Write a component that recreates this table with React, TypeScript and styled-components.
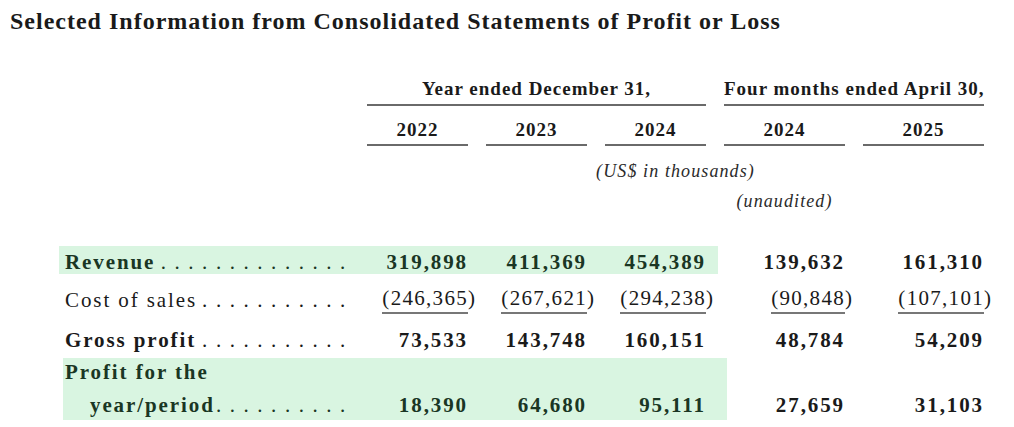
import React from "react";
import styled, { createGlobalStyle } from "styled-components";

const GlobalStyle = createGlobalStyle`
  html, body { margin: 0; padding: 0; background: #ffffff; }
  body { font-family: "Liberation Serif", "Times New Roman", serif; color: #1a1a1a; }
`;

const INK = "#1a1a1a";
const GREEN_INK = "#1a3624";

const Page = styled.div`
  position: relative;
  width: 1014px;
  height: 427px;
  overflow: hidden;
  background: #ffffff;
`;

const Highlight = styled.div`
  position: absolute;
  z-index: 0;
  background: #d9f5e1;
`;

const Content = styled.div`
  position: relative;
  z-index: 1;
`;

const Title = styled.h1`
  margin: 0;
  padding: 8px 0 0 10px;
  height: 26px;
  font-size: 24px;
  line-height: 26px;
  font-weight: bold;
  letter-spacing: 1px;
  color: ${INK};
  white-space: nowrap;
`;

const Row = styled.div<{ $mt: number }>`
  display: grid;
  grid-template-columns: 284px repeat(3, 101px) repeat(2, 121px);
  column-gap: 18px;
  margin: ${(p) => p.$mt}px 0 0 65px;
  align-items: end;
`;

const GroupHead = styled.div<{ $from: number; $to: number }>`
  grid-column: ${(p) => p.$from} / ${(p) => p.$to};
  text-align: center;
  font-size: 19px;
  line-height: 24px;
  font-weight: bold;
  letter-spacing: 1px;
  padding-bottom: 3px;
  border-bottom: 2px solid #6a6a6a;
  white-space: nowrap;
`;

const YearHead = styled.div<{ $col: number }>`
  grid-column: ${(p) => p.$col};
  text-align: center;
  font-size: 19px;
  line-height: 24px;
  font-weight: bold;
  letter-spacing: 1px;
  padding-bottom: 2px;
  border-bottom: 2px solid #6a6a6a;
`;

const Note = styled.div<{ $from: number; $to: number }>`
  grid-column: ${(p) => p.$from} / ${(p) => p.$to};
  text-align: center;
  font-size: 18px;
  line-height: 24px;
  font-style: italic;
  letter-spacing: 1.1px;
  white-space: nowrap;
  color: #2a2a2a;
`;

const LabelCell = styled.div<{ $bold?: boolean; $hl?: boolean; $lh: number }>`
  grid-column: 1;
  font-size: 21px;
  line-height: ${(p) => p.$lh}px;
  font-weight: ${(p) => (p.$bold ? "bold" : "normal")};
  letter-spacing: 1.9px;
  color: ${(p) => (p.$hl ? GREEN_INK : INK)};
`;

const LabelLine = styled.div<{ $indent?: number }>`
  display: flex;
  align-items: baseline;
  justify-content: space-between;
  padding-left: ${(p) => p.$indent ?? 0}px;
`;

const LabelText = styled.span`
  white-space: nowrap;
`;

const Leader = styled.span`
  white-space: pre;
  font-weight: normal;
  letter-spacing: 1.65px;
  padding-right: 2px;
`;

const NumCell = styled.div<{ $bold?: boolean; $hl?: boolean; $lh: number }>`
  text-align: right;
  font-size: 21px;
  line-height: ${(p) => p.$lh}px;
  font-weight: ${(p) => (p.$bold ? "bold" : "normal")};
  letter-spacing: ${(p) => (p.$bold ? 1.9 : 1.3)}px;
  color: ${(p) => (p.$hl ? GREEN_INK : INK)};
  white-space: nowrap;
`;

const Figure = styled.span<{ $rule?: boolean }>`
  display: inline-block;
  border-bottom: ${(p) => (p.$rule ? "2px solid #777" : "0")};
  line-height: inherit;
`;

const Close = styled.span`
  display: inline-block;
  width: 0;
  overflow: visible;
`;

type Line = {
  label: string[];
  dots: number;
  bold: boolean;
  values: string[];
  hlCols: number;
  rule?: boolean;
  mt: number;
  lh: number;
};

const LINES: Line[] = [
  {
    label: ["Revenue"],
    dots: 14,
    bold: true,
    values: ["319,898", "411,369", "454,389", "139,632", "161,310"],
    hlCols: 3,
    mt: 35,
    lh: 28,
  },
  {
    label: ["Cost of sales"],
    dots: 11,
    bold: false,
    values: ["(246,365)", "(267,621)", "(294,238)", "(90,848)", "(107,101)"],
    hlCols: 0,
    rule: true,
    mt: 8,
    lh: 28,
  },
  {
    label: ["Gross profit"],
    dots: 11,
    bold: true,
    values: ["73,533", "143,748", "160,151", "48,784", "54,209"],
    hlCols: 0,
    mt: 12,
    lh: 28,
  },
  {
    label: ["Profit for the", "year/period"],
    dots: 10,
    bold: true,
    values: ["18,390", "64,680", "95,111", "27,659", "31,103"],
    hlCols: 3,
    mt: 2,
    lh: 33,
  },
];

function Value({ v, rule }: { v: string; rule?: boolean }) {
  if (v.endsWith(")")) {
    return (
      <>
        <Figure $rule={rule}>{v.slice(0, -1)}</Figure>
        <Close>)</Close>
      </>
    );
  }
  return <Figure $rule={rule}>{v}</Figure>;
}

function DataRow({ line }: { line: Line }) {
  const hl = line.hlCols > 0;
  return (
    <Row $mt={line.mt}>
      <LabelCell $bold={line.bold} $hl={hl} $lh={line.lh}>
        {line.label.map((t, i) => {
          const last = i === line.label.length - 1;
          return (
            <LabelLine key={t} $indent={i > 0 ? 25 : 0}>
              <LabelText>{t}</LabelText>
              {last && <Leader>{Array(line.dots).fill(".").join(" ")}</Leader>}
            </LabelLine>
          );
        })}
      </LabelCell>
      {line.values.map((v, i) => (
        <NumCell key={i} $bold={line.bold} $hl={i < line.hlCols} $lh={line.lh}>
          <Value v={v} rule={line.rule} />
        </NumCell>
      ))}
    </Row>
  );
}

export default function App() {
  return (
    <Page>
      <GlobalStyle />
      <Highlight style={{ left: 59, top: 246, width: 659, height: 28 }} />
      <Highlight style={{ left: 63, top: 358, width: 664, height: 62 }} />
      <Content>
        <Title>Selected Information from Consolidated Statements of Profit or Loss</Title>
        <Row $mt={43}>
          <GroupHead $from={2} $to={5}>Year ended December 31,</GroupHead>
          <GroupHead $from={5} $to={7}>Four months ended April 30,</GroupHead>
        </Row>
        <Row $mt={12}>
          <YearHead $col={2}>2022</YearHead>
          <YearHead $col={3}>2023</YearHead>
          <YearHead $col={4}>2024</YearHead>
          <YearHead $col={5}>2024</YearHead>
          <YearHead $col={6}>2025</YearHead>
        </Row>
        <Row $mt={13}>
          <Note $from={2} $to={7}>(US$ in thousands)</Note>
        </Row>
        <Row $mt={6}>
          <Note $from={5} $to={6}>(unaudited)</Note>
        </Row>
        {LINES.map((l) => (
          <DataRow key={l.label[0]} line={l} />
        ))}
      </Content>
    </Page>
  );
}
